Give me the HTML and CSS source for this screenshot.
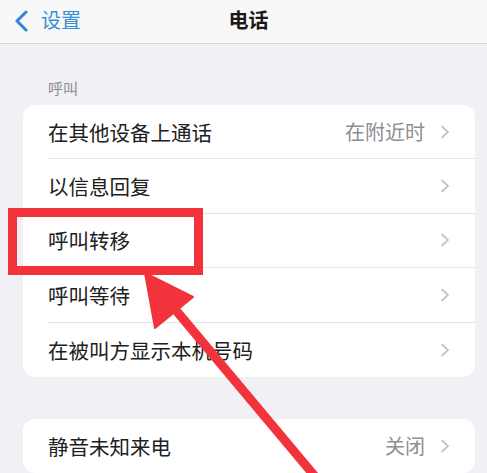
FILE: index.html
```html
<!DOCTYPE html>
<html lang="zh">
<head>
<meta charset="utf-8">
<title>电话</title>
<link rel="stylesheet" href="styles.css">
</head>
<body>
<div class="page">
  <header class="nav">
    <div class="back">
      <svg class="back-icon" width="15" height="22" viewBox="0 0 15 22"><polyline points="12,2 3,11 12,20" fill="none" stroke="#2f86d6" stroke-width="3" stroke-linecap="round" stroke-linejoin="round"/></svg>
      <span class="back-text">设置</span>
    </div>
    <div class="title">电话</div>
    <div class="spacer"></div>
  </header>

  <div class="section-header">呼叫</div>
  <div class="card">
    <div class="row"><div class="row-body"><span class="label">在其他设备上通话</span><span class="value">在附近时</span><svg class="chev" width="10" height="14" viewBox="0 0 10 14"><polyline points="2,1.5 8,7 2,12.5" fill="none" stroke="#c4c4c8" stroke-width="1.8" stroke-linecap="round" stroke-linejoin="round"/></svg></div></div>
    <div class="row"><div class="row-body"><span class="label">以信息回复</span><svg class="chev" width="10" height="14" viewBox="0 0 10 14"><polyline points="2,1.5 8,7 2,12.5" fill="none" stroke="#c4c4c8" stroke-width="1.8" stroke-linecap="round" stroke-linejoin="round"/></svg></div></div>
    <div class="row"><div class="row-body"><span class="label">呼叫转移</span><svg class="chev" width="10" height="14" viewBox="0 0 10 14"><polyline points="2,1.5 8,7 2,12.5" fill="none" stroke="#c4c4c8" stroke-width="1.8" stroke-linecap="round" stroke-linejoin="round"/></svg></div></div>
    <div class="row"><div class="row-body"><span class="label">呼叫等待</span><svg class="chev" width="10" height="14" viewBox="0 0 10 14"><polyline points="2,1.5 8,7 2,12.5" fill="none" stroke="#c4c4c8" stroke-width="1.8" stroke-linecap="round" stroke-linejoin="round"/></svg></div></div>
    <div class="row last"><div class="row-body"><span class="label">在被叫方显示本机号码</span><svg class="chev" width="10" height="14" viewBox="0 0 10 14"><polyline points="2,1.5 8,7 2,12.5" fill="none" stroke="#c4c4c8" stroke-width="1.8" stroke-linecap="round" stroke-linejoin="round"/></svg></div></div>
  </div>

  <div class="card card-2">
    <div class="row last"><div class="row-body"><span class="label">静音未知来电</span><span class="value">关闭</span><svg class="chev" width="10" height="14" viewBox="0 0 10 14"><polyline points="2,1.5 8,7 2,12.5" fill="none" stroke="#c4c4c8" stroke-width="1.8" stroke-linecap="round" stroke-linejoin="round"/></svg></div></div>
  </div>

  <div class="highlight-box"></div>
  <svg class="arrow" width="487" height="473" viewBox="0 0 487 473">
    <line x1="174" y1="308" x2="318" y2="480" stroke="#f3333b" stroke-width="9" stroke-linecap="round"/>
    <polygon points="145,273 155,328 193,297" fill="#f3333b" stroke="#f3333b" stroke-width="2" stroke-linejoin="round"/>
  </svg>
</div>
</body>
</html>
```
FILE: styles.css
```css
html, body {
  margin: 0;
  padding: 0;
}
body {
  background: #f0f0f5;
  font-family: "Noto Sans CJK SC", "Noto Sans", sans-serif;
  color: #1e1e20;
  width: 487px;
  height: 473px;
  overflow: hidden;
}
.page {
  position: relative;
  width: 487px;
  height: 473px;
  overflow: hidden;
}
.nav {
  height: 43px;
  background: #f8f8f9;
  border-bottom: 1px solid #d6d6d9;
  display: grid;
  grid-template-columns: 1fr auto 1fr;
  align-items: center;
}
.back {
  display: flex;
  align-items: center;
  padding-left: 14px;
  gap: 12px;
}
.back-icon {
  display: block;
  margin-top: -1px;
}
.back-text {
  color: #3a8ed3;
  font-size: 20px;
  line-height: 24px;
  margin-top: -3px;
}
.title {
  font-size: 20px;
  font-weight: 700;
  line-height: 24px;
  padding-left: 10px;
  margin-top: -3px;
  color: #1a1a1a;
}
.section-header {
  padding: 33px 0 0 48px;
  height: 22px;
  line-height: 22px;
  font-size: 15px;
  color: #8d8d92;
  margin-bottom: 6px;
}
.card {
  margin: 0 12px 0 23px;
  background: #ffffff;
  border-radius: 12px;
  overflow: hidden;
}
.card-2 {
  margin-top: 42px;
}
.row {
  padding-left: 25px;
  height: 54.4px;
  display: flex;
}
.row-body {
  flex: 1;
  display: flex;
  align-items: center;
  border-bottom: 1px solid #e4e4e7;
  padding-right: 25px;
}
.row.last .row-body {
  border-bottom: none;
}
.label {
  flex: 1;
  font-size: 20.5px;
  line-height: 26px;
  color: #202022;
}
.value {
  font-size: 20px;
  line-height: 26px;
  color: #8e8e93;
  margin-right: 15px;
}
.chev {
  display: block;
}
.highlight-box {
  position: absolute;
  left: 8px;
  top: 208px;
  width: 177px;
  height: 49px;
  border: 9px solid #f3333b;
}
.arrow {
  position: absolute;
  left: 0;
  top: 0;
  pointer-events: none;
}
```
